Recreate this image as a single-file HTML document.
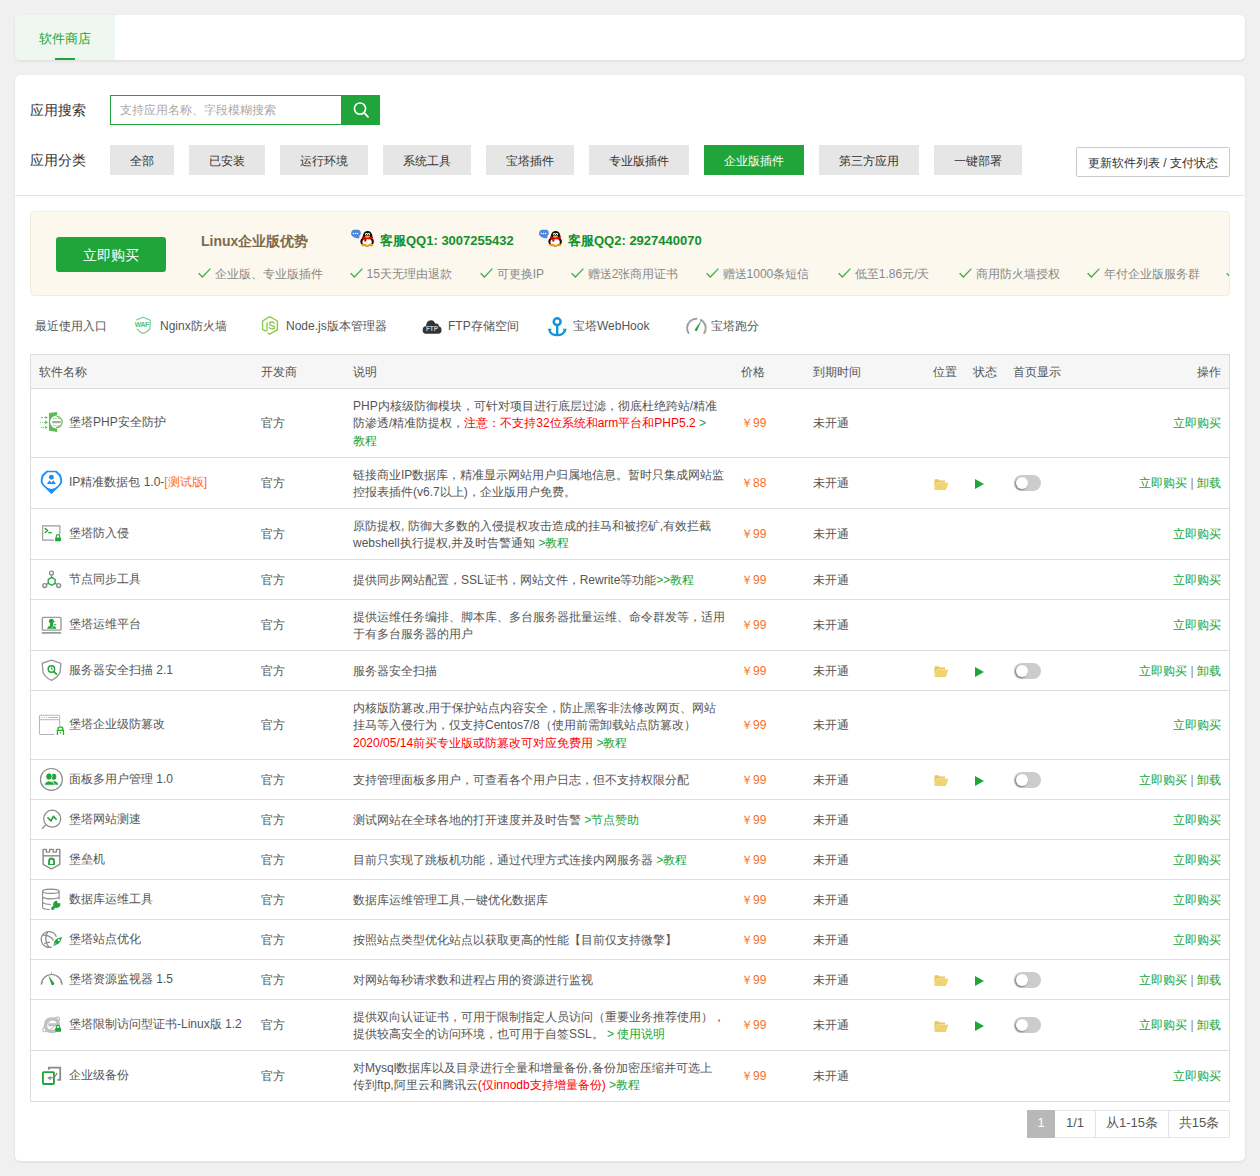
<!DOCTYPE html>
<html><head><meta charset="utf-8">
<style>
*{box-sizing:border-box}
html,body{margin:0;padding:0}
body{width:1260px;height:1176px;overflow:hidden;background:#f0f0f0;font-family:"Liberation Sans",sans-serif;color:#666;font-size:12px;position:relative}
.abs{position:absolute}
.card{position:absolute;background:#fff;border-radius:5px;box-shadow:0 1px 3px rgba(0,0,0,.09)}
.tab{position:absolute;left:0;top:0;width:100px;height:45px;background:#eff8f0;border-radius:5px 0 0 5px;color:#20a53a;font-size:13px;line-height:45px;text-align:center}
.tab i{position:absolute;left:40px;top:43px;width:20px;height:2px;background:#20a53a}
.tab{padding-top:1px}
.lbl{position:absolute;font-size:14px;color:#333;line-height:20px;white-space:nowrap}
.sinput{position:absolute;left:95px;top:20px;width:232px;height:30px;border:1px solid #20a53a;font-size:12px;color:#aaa;line-height:28px;padding-left:9px;white-space:nowrap}
.sbtn{position:absolute;left:326px;top:20px;width:39px;height:30px;background:#20a53a}
.cat{position:absolute;top:70px;height:30px;line-height:32px;background:#e6e6e6;color:#333;font-size:12px;text-align:center;white-space:nowrap}
.cat.on{background:#20a53a;color:#fff}
.more{position:absolute;left:1061px;top:72px;width:154px;height:30px;border:1px solid #ccc;border-radius:2px;line-height:30px;text-align:center;font-size:12px;color:#333;white-space:nowrap}
.sep{position:absolute;left:0;top:120px;width:1230px;height:1px;background:#e4e4e4}
.qq{width:24px;height:18px}
.qqt{font-size:13px;font-weight:bold;color:#12902c;margin-top:1px;line-height:20px;white-space:nowrap}
.chk{white-space:nowrap;height:20px}
.chk svg{position:absolute;left:0;top:6px}
.chk span{position:absolute;left:17px;top:0;font-size:12px;line-height:20px;color:#888}
.tbl{position:absolute;left:30px;top:354px;width:1200px;height:748px;border:1px solid #ddd;border-bottom:0}
.tr{position:absolute;left:0;width:1198px;border-bottom:1px solid #ddd}
.th{background:#f6f6f6}
.tr .c{position:absolute;top:1px;bottom:-1px;display:flex;align-items:center;white-space:nowrap;font-size:12px;line-height:17.14px;color:#555}
.tr .d{display:flex}
.tr .d>div{}
.g{color:#20a53a}
.r{color:red}
.o{color:#fc6d26}
.tr .p{color:#fc6d26}
.ic{position:absolute;top:0;bottom:0;display:flex;align-items:center}
.fold{position:absolute;left:903px;top:50%;margin-top:-4.5px;width:15px;height:11px}
.play{position:absolute;left:944px;top:50%;margin-top:-4px;width:0;height:0;border-left:9px solid #20a53a;border-top:5.5px solid transparent;border-bottom:5.5px solid transparent}
.sw{position:absolute;left:983px;top:50%;margin-top:-8px;width:27px;height:16px;border-radius:8px;background:#ccc}
.sw i{position:absolute;left:2px;top:2px;width:12px;height:12px;border-radius:50%;background:#fff;box-shadow:-1px 1px 2px rgba(0,0,0,.4)}
.chk span{top:2px}
.rc{font-size:12px;line-height:18px;margin-top:1px;color:#555;white-space:nowrap}
.ri{width:18px;height:18px}
.pg{height:28px;border:1px solid #e5e5e5;line-height:24px;text-align:center;font-size:13px;color:#555;white-space:nowrap}
.tr .c.g{color:#20a53a}
</style></head><body>

<div class="card" style="left:15px;top:15px;width:1230px;height:45px">
  <div class="tab">软件商店<i></i></div>
</div>

<div class="card" style="left:15px;top:75px;width:1230px;height:1086px">
  <div class="lbl" style="left:15px;top:25px">应用搜索</div>
  <div class="sinput">支持应用名称、字段模糊搜索</div>
  <div class="sbtn"><svg width="39" height="30" viewBox="0 0 39 30"><circle cx="19" cy="13.6" r="5.6" fill="none" stroke="#fff" stroke-width="1.6"/><line x1="23" y1="17.6" x2="27" y2="21.8" stroke="#fff" stroke-width="1.8" stroke-linecap="round"/></svg></div>
  <div class="lbl" style="left:15px;top:75px">应用分类</div>
  <div class="cat" style="left:95px;width:64px">全部</div>
  <div class="cat" style="left:174px;width:76px">已安装</div>
  <div class="cat" style="left:265px;width:88px">运行环境</div>
  <div class="cat" style="left:368px;width:88px">系统工具</div>
  <div class="cat" style="left:471px;width:88px">宝塔插件</div>
  <div class="cat" style="left:574px;width:100px">专业版插件</div>
  <div class="cat on" style="left:689px;width:100px">企业版插件</div>
  <div class="cat" style="left:804px;width:100px">第三方应用</div>
  <div class="cat" style="left:919px;width:88px">一键部署</div>
  <div class="more">更新软件列表 / 支付状态</div>
  <div class="sep"></div>
</div>


<div class="abs" style="left:30px;top:211px;width:1200px;height:85px;background:#fcf8ee;border:1px solid #f3ecdb;border-radius:4px;overflow:hidden">
  <div class="abs" style="left:25px;top:25px;width:110px;height:35px;background:#20a53a;border-radius:3px;color:#fff;font-size:14px;line-height:37px;text-align:center">立即购买</div>
  <div class="abs" style="left:170px;top:18px;font-size:14px;font-weight:bold;color:#7d6a4c;line-height:20px;white-space:nowrap;margin-top:1px">Linux企业版优势</div>
  
  <div class="abs qqt" style="left:349px;top:18px">客服QQ1: 3007255432</div>
  
  <div class="abs qqt" style="left:537px;top:18px">客服QQ2: 2927440070</div>
  <div class="abs chk" style="left:167.0px;top:50px"><svg width="13" height="10" viewBox="0 0 13 10"><polyline points="0.6,5.2 4.4,9 12.4,0.6" fill="none" stroke="#3cb04f" stroke-width="1.3"/></svg><span>企业版、专业版插件</span></div>
  <div class="abs chk" style="left:318.6px;top:50px"><svg width="13" height="10" viewBox="0 0 13 10"><polyline points="0.6,5.2 4.4,9 12.4,0.6" fill="none" stroke="#3cb04f" stroke-width="1.3"/></svg><span>15天无理由退款</span></div>
  <div class="abs chk" style="left:448.7px;top:50px"><svg width="13" height="10" viewBox="0 0 13 10"><polyline points="0.6,5.2 4.4,9 12.4,0.6" fill="none" stroke="#3cb04f" stroke-width="1.3"/></svg><span>可更换IP</span></div>
  <div class="abs chk" style="left:539.8px;top:50px"><svg width="13" height="10" viewBox="0 0 13 10"><polyline points="0.6,5.2 4.4,9 12.4,0.6" fill="none" stroke="#3cb04f" stroke-width="1.3"/></svg><span>赠送2张商用证书</span></div>
  <div class="abs chk" style="left:674.6px;top:50px"><svg width="13" height="10" viewBox="0 0 13 10"><polyline points="0.6,5.2 4.4,9 12.4,0.6" fill="none" stroke="#3cb04f" stroke-width="1.3"/></svg><span>赠送1000条短信</span></div>
  <div class="abs chk" style="left:806.8px;top:50px"><svg width="13" height="10" viewBox="0 0 13 10"><polyline points="0.6,5.2 4.4,9 12.4,0.6" fill="none" stroke="#3cb04f" stroke-width="1.3"/></svg><span>低至1.86元/天</span></div>
  <div class="abs chk" style="left:927.7px;top:50px"><svg width="13" height="10" viewBox="0 0 13 10"><polyline points="0.6,5.2 4.4,9 12.4,0.6" fill="none" stroke="#3cb04f" stroke-width="1.3"/></svg><span>商用防火墙授权</span></div>
  <div class="abs chk" style="left:1055.9px;top:50px"><svg width="13" height="10" viewBox="0 0 13 10"><polyline points="0.6,5.2 4.4,9 12.4,0.6" fill="none" stroke="#3cb04f" stroke-width="1.3"/></svg><span>年付企业版服务群</span></div>
  <div class="abs chk" style="left:1195.2px;top:50px"><svg width="13" height="10" viewBox="0 0 13 10"><polyline points="0.6,5.2 4.4,9 12.4,0.6" fill="none" stroke="#3cb04f" stroke-width="1.3"/></svg><span>更多</span></div>
</div>

<div class="abs rc" style="left:35px;top:316px">最近使用入口</div>
<div class="abs ri" style="left:135px;top:316px"></div><div class="abs rc" style="left:160px;top:316px">Nginx防火墙</div>
<div class="abs ri" style="left:262px;top:316px"></div><div class="abs rc" style="left:286px;top:316px">Node.js版本管理器</div>
<div class="abs ri" style="left:422px;top:316px"></div><div class="abs rc" style="left:448px;top:316px">FTP存储空间</div>
<div class="abs ri" style="left:547px;top:316px"></div><div class="abs rc" style="left:573px;top:316px">宝塔WebHook</div>
<div class="abs ri" style="left:686px;top:316px"></div><div class="abs rc" style="left:711px;top:316px">宝塔跑分</div>

<!--TABLE-->
<div class="tbl">
<div class="tr th" style="top:0;height:34px"><span class="c" style="left:8px">软件名称</span><span class="c" style="left:230px">开发商</span><span class="c" style="left:322px">说明</span><span class="c" style="left:710px">价格</span><span class="c" style="left:782px">到期时间</span><span class="c" style="left:902px">位置</span><span class="c" style="left:942px">状态</span><span class="c" style="left:982px">首页显示</span><span class="c" style="right:8px">操作</span></div>
<div class="tr" style="top:34px;height:69px"><span class="c" style="left:38px;top:0;bottom:0"><div>堡塔PHP安全防护</div></span><span class="c" style="left:230px">官方</span><span class="c d" style="left:322px"><div>PHP内核级防御模块，可针对项目进行底层过滤，彻底杜绝跨站/精准<br>防渗透/精准防提权，<span class="r">注意：不支持32位系统和arm平台和PHP5.2</span><span class="g"> &gt;<br>教程</span></div></span><span class="c p" style="left:710px">￥99</span><span class="c" style="left:782px">未开通</span><span class="c g" style="right:8px">立即购买</span></div>
<div class="tr" style="top:103px;height:51px"><span class="c" style="left:38px;top:0;bottom:0"><div>IP精准数据包 1.0-<span class="o">[测试版]</span></div></span><span class="c" style="left:230px">官方</span><span class="c d" style="left:322px"><div>链接商业IP数据库，精准显示网站用户归属地信息。暂时只集成网站监<br>控报表插件(v6.7以上)，企业版用户免费。</div></span><span class="c p" style="left:710px">￥88</span><span class="c" style="left:782px">未开通</span><span class="fold"><svg width="15" height="11" viewBox="0 0 15 11"><path d="M0.5,10.5 V1 Q0.5,0.3 1.2,0.3 H4.6 L5.8,1.4 H11 V3.6 H3 Z" fill="#e8c85a"/><path d="M3,3.8 H14.4 L11.8,11 H0.4 Z" fill="#f0d36e"/></svg></span><span class="play"></span><span class="sw"><i></i></span><span class="c g" style="right:8px"><div>立即购买 <span style="color:#888">|</span> 卸载</div></span></div>
<div class="tr" style="top:154px;height:51px"><span class="c" style="left:38px;top:0;bottom:0"><div>堡塔防入侵</div></span><span class="c" style="left:230px">官方</span><span class="c d" style="left:322px"><div>原防提权, 防御大多数的入侵提权攻击造成的挂马和被挖矿,有效拦截<br>webshell执行提权,并及时告警通知 <span class="g">&gt;教程</span></div></span><span class="c p" style="left:710px">￥99</span><span class="c" style="left:782px">未开通</span><span class="c g" style="right:8px">立即购买</span></div>
<div class="tr" style="top:205px;height:40px"><span class="c" style="left:38px;top:0;bottom:0"><div>节点同步工具</div></span><span class="c" style="left:230px">官方</span><span class="c d" style="left:322px"><div>提供同步网站配置，SSL证书，网站文件，Rewrite等功能<span class="g">&gt;&gt;教程</span></div></span><span class="c p" style="left:710px">￥99</span><span class="c" style="left:782px">未开通</span><span class="c g" style="right:8px">立即购买</span></div>
<div class="tr" style="top:245px;height:51px"><span class="c" style="left:38px;top:0;bottom:0"><div>堡塔运维平台</div></span><span class="c" style="left:230px">官方</span><span class="c d" style="left:322px"><div>提供运维任务编排、脚本库、多台服务器批量运维、命令群发等，适用<br>于有多台服务器的用户</div></span><span class="c p" style="left:710px">￥99</span><span class="c" style="left:782px">未开通</span><span class="c g" style="right:8px">立即购买</span></div>
<div class="tr" style="top:296px;height:40px"><span class="c" style="left:38px;top:0;bottom:0"><div>服务器安全扫描 2.1</div></span><span class="c" style="left:230px">官方</span><span class="c d" style="left:322px"><div>服务器安全扫描</div></span><span class="c p" style="left:710px">￥99</span><span class="c" style="left:782px">未开通</span><span class="fold"><svg width="15" height="11" viewBox="0 0 15 11"><path d="M0.5,10.5 V1 Q0.5,0.3 1.2,0.3 H4.6 L5.8,1.4 H11 V3.6 H3 Z" fill="#e8c85a"/><path d="M3,3.8 H14.4 L11.8,11 H0.4 Z" fill="#f0d36e"/></svg></span><span class="play"></span><span class="sw"><i></i></span><span class="c g" style="right:8px"><div>立即购买 <span style="color:#888">|</span> 卸载</div></span></div>
<div class="tr" style="top:336px;height:69px"><span class="c" style="left:38px;top:0;bottom:0"><div>堡塔企业级防篡改</div></span><span class="c" style="left:230px">官方</span><span class="c d" style="left:322px"><div>内核版防篡改,用于保护站点内容安全，防止黑客非法修改网页、网站<br>挂马等入侵行为，仅支持Centos7/8（使用前需卸载站点防篡改）<br><span class="r">2020/05/14前买专业版或防篡改可对应免费用</span> <span class="g">&gt;教程</span></div></span><span class="c p" style="left:710px">￥99</span><span class="c" style="left:782px">未开通</span><span class="c g" style="right:8px">立即购买</span></div>
<div class="tr" style="top:405px;height:40px"><span class="c" style="left:38px;top:0;bottom:0"><div>面板多用户管理 1.0</div></span><span class="c" style="left:230px">官方</span><span class="c d" style="left:322px"><div>支持管理面板多用户，可查看各个用户日志，但不支持权限分配</div></span><span class="c p" style="left:710px">￥99</span><span class="c" style="left:782px">未开通</span><span class="fold"><svg width="15" height="11" viewBox="0 0 15 11"><path d="M0.5,10.5 V1 Q0.5,0.3 1.2,0.3 H4.6 L5.8,1.4 H11 V3.6 H3 Z" fill="#e8c85a"/><path d="M3,3.8 H14.4 L11.8,11 H0.4 Z" fill="#f0d36e"/></svg></span><span class="play"></span><span class="sw"><i></i></span><span class="c g" style="right:8px"><div>立即购买 <span style="color:#888">|</span> 卸载</div></span></div>
<div class="tr" style="top:445px;height:40px"><span class="c" style="left:38px;top:0;bottom:0"><div>堡塔网站测速</div></span><span class="c" style="left:230px">官方</span><span class="c d" style="left:322px"><div>测试网站在全球各地的打开速度并及时告警 <span class="g">&gt;节点赞助</span></div></span><span class="c p" style="left:710px">￥99</span><span class="c" style="left:782px">未开通</span><span class="c g" style="right:8px">立即购买</span></div>
<div class="tr" style="top:485px;height:40px"><span class="c" style="left:38px;top:0;bottom:0"><div>堡垒机</div></span><span class="c" style="left:230px">官方</span><span class="c d" style="left:322px"><div>目前只实现了跳板机功能，通过代理方式连接内网服务器 <span class="g">&gt;教程</span></div></span><span class="c p" style="left:710px">￥99</span><span class="c" style="left:782px">未开通</span><span class="c g" style="right:8px">立即购买</span></div>
<div class="tr" style="top:525px;height:40px"><span class="c" style="left:38px;top:0;bottom:0"><div>数据库运维工具</div></span><span class="c" style="left:230px">官方</span><span class="c d" style="left:322px"><div>数据库运维管理工具,一键优化数据库</div></span><span class="c p" style="left:710px">￥99</span><span class="c" style="left:782px">未开通</span><span class="c g" style="right:8px">立即购买</span></div>
<div class="tr" style="top:565px;height:40px"><span class="c" style="left:38px;top:0;bottom:0"><div>堡塔站点优化</div></span><span class="c" style="left:230px">官方</span><span class="c d" style="left:322px"><div>按照站点类型优化站点以获取更高的性能【目前仅支持微擎】</div></span><span class="c p" style="left:710px">￥99</span><span class="c" style="left:782px">未开通</span><span class="c g" style="right:8px">立即购买</span></div>
<div class="tr" style="top:605px;height:40px"><span class="c" style="left:38px;top:0;bottom:0"><div>堡塔资源监视器 1.5</div></span><span class="c" style="left:230px">官方</span><span class="c d" style="left:322px"><div>对网站每秒请求数和进程占用的资源进行监视</div></span><span class="c p" style="left:710px">￥99</span><span class="c" style="left:782px">未开通</span><span class="fold"><svg width="15" height="11" viewBox="0 0 15 11"><path d="M0.5,10.5 V1 Q0.5,0.3 1.2,0.3 H4.6 L5.8,1.4 H11 V3.6 H3 Z" fill="#e8c85a"/><path d="M3,3.8 H14.4 L11.8,11 H0.4 Z" fill="#f0d36e"/></svg></span><span class="play"></span><span class="sw"><i></i></span><span class="c g" style="right:8px"><div>立即购买 <span style="color:#888">|</span> 卸载</div></span></div>
<div class="tr" style="top:645px;height:51px"><span class="c" style="left:38px;top:0;bottom:0"><div>堡塔限制访问型证书-Linux版 1.2</div></span><span class="c" style="left:230px">官方</span><span class="c d" style="left:322px"><div>提供双向认证证书，可用于限制指定人员访问（重要业务推荐使用），<br>提供较高安全的访问环境，也可用于自签SSL。 <span class="g"> &gt; 使用说明</span></div></span><span class="c p" style="left:710px">￥99</span><span class="c" style="left:782px">未开通</span><span class="fold"><svg width="15" height="11" viewBox="0 0 15 11"><path d="M0.5,10.5 V1 Q0.5,0.3 1.2,0.3 H4.6 L5.8,1.4 H11 V3.6 H3 Z" fill="#e8c85a"/><path d="M3,3.8 H14.4 L11.8,11 H0.4 Z" fill="#f0d36e"/></svg></span><span class="play"></span><span class="sw"><i></i></span><span class="c g" style="right:8px"><div>立即购买 <span style="color:#888">|</span> 卸载</div></span></div>
<div class="tr" style="top:696px;height:51px"><span class="c" style="left:38px;top:0;bottom:0"><div>企业级备份</div></span><span class="c" style="left:230px">官方</span><span class="c d" style="left:322px"><div>对Mysql数据库以及目录进行全量和增量备份,备份加密压缩并可选上<br>传到ftp,阿里云和腾讯云<span class="r">(仅innodb支持增量备份)</span> <span class="g">&gt;教程</span></div></span><span class="c p" style="left:710px">￥99</span><span class="c" style="left:782px">未开通</span><span class="c g" style="right:8px">立即购买</span></div>
</div>
<!--/TABLE--><!--/TABLE--><!--/TABLE--><!--/TABLE--><!--/TABLE--><!--/TABLE-->
<div class="abs pg" style="left:1027px;top:1110px;width:28px;background:#b8b8b8;border-color:#b8b8b8;color:#fff">1</div>
<div class="abs pg" style="left:1055px;top:1110px;width:41px;border-left:0">1/1</div>
<div class="abs pg" style="left:1095px;top:1110px;width:74px">从1-15条</div>
<div class="abs pg" style="left:1168px;top:1110px;width:62px">共15条</div>

<!--ICONS-->
<svg class="abs" style="left:34px;top:400px" width="40" height="40" viewBox="0 0 1176 1176">
<g fill="#5dba55">
<polygon points="440,385 680,350 680,940 440,905"/>
<rect x="205" y="500" width="55" height="30" rx="12"/><rect x="300" y="500" width="50" height="30" rx="12"/><polygon points="340,470 405,515 340,560"/>
<circle cx="190" cy="655" r="17"/><circle cx="250" cy="655" r="17"/><rect x="300" y="640" width="50" height="30" rx="12"/><polygon points="330,600 410,655 330,710"/>
<circle cx="215" cy="805" r="17"/><circle cx="275" cy="805" r="17"/><polygon points="330,760 400,805 330,850"/>
</g>
<circle cx="665" cy="648" r="190" fill="#fff"/>
<circle cx="665" cy="648" r="165" fill="none" stroke="#5dba55" stroke-width="36" stroke-dasharray="520 520" transform="rotate(-90 665 648)"/>
<path d="M560,560 Q665,520 770,560 M560,740 Q665,780 770,740" stroke="#5dba55" stroke-width="26" fill="none" stroke-dasharray="40 25"/>
<rect x="535" y="615" width="250" height="70" fill="#aaa" rx="10"/>
</svg>
<svg class="abs" style="left:34px;top:465px" width="40" height="40" viewBox="0 0 1176 1176">
<path fill-rule="evenodd" fill="#1e8ffa" d="M365,170 L665,170 L795,295 L825,420 L825,515 L785,590 L512,860 L240,590 L200,515 L200,420 L230,295 Z M405,215 L625,215 L740,320 L770,430 L770,505 L720,590 Q640,690 512,705 Q385,690 305,590 L255,505 L255,430 L285,320 Z"/>
<circle cx="512" cy="362" r="72" fill="#1e8ffa"/>
<path d="M380,555 L455,445 L512,520 L570,445 L645,555 Z" fill="#1e8ffa"/>
</svg>
<svg class="abs" style="left:34px;top:514px" width="40" height="40" viewBox="0 0 1176 1176">
<path d="M585,770 L255,770 L255,350 L760,350 L760,600" fill="none" stroke="#9a9a9a" stroke-width="34"/>
<polyline points="330,430 400,485 330,545" fill="none" stroke="#20a53a" stroke-width="44" stroke-linecap="round" stroke-linejoin="round"/>
<line x1="420" y1="548" x2="525" y2="548" stroke="#20a53a" stroke-width="38"/>
<path d="M655,700 L655,660 Q655,605 705,605 Q755,605 755,660 L755,700" fill="none" stroke="#20a53a" stroke-width="34"/>
<rect x="620" y="690" width="172" height="110" rx="14" fill="#20a53a"/>
<rect x="678" y="640" width="55" height="40" fill="#fff"/>
</svg>
<svg class="abs" style="left:34px;top:559px" width="40" height="40" viewBox="0 0 1176 1176">
<g fill="none" stroke="#8a8a8a" stroke-width="40">
<circle cx="515" cy="415" r="58"/><circle cx="315" cy="780" r="58"/><circle cx="725" cy="780" r="58"/>
<line x1="518" y1="470" x2="518" y2="540"/><line x1="365" y1="748" x2="420" y2="718"/><line x1="618" y1="718" x2="675" y2="748"/>
</g>
<polygon points="520,540 622,598 622,714 520,772 418,714 418,598" fill="none" stroke="#20a53a" stroke-width="38"/>
</svg>
<svg class="abs" style="left:34px;top:605px" width="40" height="40" viewBox="0 0 1176 1176">
<rect x="245" y="365" width="548" height="375" rx="28" fill="none" stroke="#9a9a9a" stroke-width="40"/>
<rect x="228" y="795" width="572" height="50" rx="18" fill="#9a9a9a"/>
<g fill="#20a53a">
<circle cx="512" cy="475" r="72"/><rect x="438" y="470" width="170" height="30" rx="10"/>
<rect x="472" y="520" width="95" height="120" rx="30"/>
<path d="M390,700 Q392,630 470,620 L560,620 Q650,630 655,700 Z"/>
<path d="M590,560 L670,575 L610,610 Z"/>
</g>
<line x1="515" y1="680" x2="580" y2="610" stroke="#fff" stroke-width="22"/>
</svg>
<svg class="abs" style="left:34px;top:650px" width="40" height="40" viewBox="0 0 1176 1176">
<path d="M240,390 L515,300 L790,395 L770,640 Q720,790 515,895 Q310,790 265,650 Z" fill="none" stroke="#9a9a9a" stroke-width="40" stroke-linejoin="round"/>
<circle cx="512" cy="560" r="95" fill="none" stroke="#20a53a" stroke-width="42"/>
<line x1="585" y1="635" x2="660" y2="710" stroke="#20a53a" stroke-width="46" stroke-linecap="round"/>
<path d="M512,500 L512,560 L560,560" fill="none" stroke="#20a53a" stroke-width="26"/>
</svg>
<svg class="abs" style="left:34px;top:705px" width="40" height="40" viewBox="0 0 1176 1176">
<path d="M600,865 L195,865 Q160,865 160,830 L160,335 Q160,300 195,300 L720,300 Q755,300 755,335 L755,600" fill="none" stroke="#b4b4c4" stroke-width="30"/>
<line x1="160" y1="432" x2="755" y2="432" stroke="#b4b4c4" stroke-width="30"/>
<g fill="#b4b4c4"><rect x="210" y="352" width="45" height="25" rx="8"/><circle cx="305" cy="365" r="16"/><circle cx="368" cy="365" r="16"/><rect x="420" y="350" width="285" height="30" rx="15"/></g>
<path d="M705,745 L705,705 Q705,640 778,640 Q850,640 850,705 L850,745" fill="none" stroke="#20b02a" stroke-width="36"/>
<path d="M688,885 L688,745 L868,745 L868,885" fill="none" stroke="#20b02a" stroke-width="36"/>
<circle cx="778" cy="815" r="24" fill="#20b02a"/>
</svg>
<svg class="abs" style="left:34px;top:759px" width="40" height="40" viewBox="0 0 1176 1176">
<circle cx="512" cy="600" r="322" fill="none" stroke="#8a8a8a" stroke-width="34"/>
<g fill="#20a53a">
<ellipse cx="585" cy="525" rx="70" ry="90"/>
<path d="M560,650 Q690,660 718,760 L600,760 Z"/>
</g>
<g fill="#20a53a" stroke="#fff" stroke-width="22">
<ellipse cx="440" cy="515" rx="92" ry="105"/>
<path d="M305,770 Q315,660 425,650 L470,650 Q595,660 618,770 Z"/>
</g>
</svg>
<svg class="abs" style="left:34px;top:799px" width="40" height="40" viewBox="0 0 1176 1176">
<circle cx="535" cy="580" r="250" fill="none" stroke="#8a8a8a" stroke-width="36"/>
<line x1="335" y1="770" x2="250" y2="860" stroke="#8a8a8a" stroke-width="36" stroke-linecap="round"/>
<polyline points="395,535 500,645 570,510 665,610" fill="none" stroke="#20a53a" stroke-width="48" stroke-linejoin="round"/>
</svg>
<svg class="abs" style="left:34px;top:839px" width="40" height="40" viewBox="0 0 1176 1176">
<path d="M268,305 L365,305 L365,385 L460,385 L460,305 L565,305 L565,385 L660,385 L660,305 L758,305 L758,745 L512,882 L268,745 Z" fill="none" stroke="#8a8a8a" stroke-width="42" stroke-linejoin="round"/>
<line x1="268" y1="495" x2="758" y2="495" stroke="#8a8a8a" stroke-width="42"/>
<path d="M443,765 L443,655 Q443,575 515,575 Q590,575 590,655 L590,765" fill="none" stroke="#20a53a" stroke-width="55"/>
<line x1="443" y1="748" x2="590" y2="748" stroke="#20a53a" stroke-width="30"/>
</svg>
<svg class="abs" style="left:34px;top:879px" width="40" height="40" viewBox="0 0 1176 1176">
<g fill="none" stroke="#8a8a8a" stroke-width="32">
<ellipse cx="495" cy="360" rx="245" ry="62"/>
<path d="M252,360 L252,850 Q300,900 465,895"/>
<path d="M738,360 L738,610"/>
<path d="M252,535 Q330,585 495,585 Q660,585 738,540"/>
<path d="M252,700 Q330,748 490,748"/>
</g>
<g fill="#20a53a">
<line x1="545" y1="870" x2="650" y2="765" stroke="#20a53a" stroke-width="85" stroke-linecap="round"/>
<circle cx="670" cy="745" r="105"/>
</g>
<circle cx="735" cy="660" r="55" fill="#fff"/>
</svg>
<svg class="abs" style="left:34px;top:919px" width="40" height="40" viewBox="0 0 1176 1176">
<g fill="none" stroke="#8a8a8a" stroke-width="36">
<path d="M660,520 A232,232 0 1 0 520,820"/>
<path d="M405,370 Q330,480 350,620 Q360,740 440,830"/>
<path d="M265,480 Q390,460 520,560 Q560,600 560,640"/>
<path d="M300,720 Q390,690 470,690"/>
</g>
<path d="M820,530 Q660,560 600,660 L560,810 L650,760 Q790,720 820,530 Z" fill="#20a53a"/>
<circle cx="730" cy="620" r="34" fill="#fff"/>
<path d="M570,790 L640,700" stroke="#fff" stroke-width="18"/>
</svg>
<svg class="abs" style="left:34px;top:959px" width="40" height="40" viewBox="0 0 1176 1176">
<path d="M215,760 A305,305 0 0 1 825,760" fill="none" stroke="#8a8a8a" stroke-width="34"/>
<g stroke="#8a8a8a" stroke-width="30"><line x1="515" y1="400" x2="515" y2="430"/><line x1="330" y1="500" x2="350" y2="520"/><line x1="700" y1="500" x2="680" y2="520"/><line x1="230" y1="685" x2="270" y2="685"/><line x1="800" y1="685" x2="770" y2="685"/></g>
<path d="M420,480 L595,710 Q600,770 545,770 Q495,765 500,715 Z" fill="#20a53a"/>
</svg>
<svg class="abs" style="left:34px;top:1004px" width="40" height="40" viewBox="0 0 1176 1176">
<g fill="none" stroke="#c0c0c0">
<path d="M700,720 Q640,810 530,810 Q340,810 340,630 Q340,440 530,440 Q720,440 720,610 L420,610" stroke-width="95"/>
<ellipse cx="505" cy="600" rx="310" ry="105" transform="rotate(-40 505 600)" stroke-width="34"/>
</g>
<path d="M660,700 L660,670 Q660,625 705,625 Q750,625 750,670 L750,700" fill="none" stroke="#20a53a" stroke-width="34"/>
<rect x="625" y="695" width="170" height="120" rx="22" fill="#20a53a"/>
</svg>
<svg class="abs" style="left:34px;top:1056px" width="40" height="40" viewBox="0 0 1176 1176">
<path d="M435,405 L435,340 L770,340 L770,705 L685,705" fill="none" stroke="#8a8a8a" stroke-width="52"/>
<rect x="262" y="475" width="325" height="350" rx="28" fill="none" stroke="#20a53a" stroke-width="56"/>
<path d="M675,495 Q650,625 470,650" fill="none" stroke="#8a8a8a" stroke-width="38"/>
<polygon points="385,650 490,590 490,715" fill="#8a8a8a"/>
</svg>
<svg class="abs" style="left:123px;top:305px" width="40" height="40" viewBox="0 0 1176 1176">
<path d="M390,440 L590,360 L805,450 L790,700 Q720,790 590,840 Q470,790 410,700" fill="none" stroke="#5cc06a" stroke-width="32" stroke-linejoin="round" opacity="0.85"/>
<text x="555" y="650" font-family="Liberation Sans" font-weight="bold" font-size="200" fill="#5cc06a" text-anchor="middle" letter-spacing="-10">WAF</text>
</svg>
<svg class="abs" style="left:250px;top:305px" width="40" height="40" viewBox="0 0 1176 1176">
<path d="M580,340 L805,470 L805,725 L580,855 L520,820" fill="none" stroke="#8cc84b" stroke-width="40" stroke-linejoin="round"/>
<path d="M500,510 L500,720 Q500,770 450,760 L370,715 L370,470 L580,340" fill="none" stroke="#8cc84b" stroke-width="40" stroke-linejoin="round"/>
<path d="M715,555 Q700,500 640,500 Q570,500 575,555 Q580,600 645,605 Q720,612 720,660 Q720,700 645,700 Q580,700 565,650" fill="none" stroke="#8cc84b" stroke-width="40"/>
</svg>
<svg class="abs" style="left:415px;top:312px" width="40" height="40" viewBox="0 0 1176 1176">
<path d="M320,640 Q225,640 225,530 Q225,430 320,420 Q340,240 470,240 Q570,240 590,340 Q700,320 700,420 Q780,440 780,540 Q780,640 680,640 Z" fill="#333"/>
<text x="500" y="560" font-family="Liberation Sans" font-weight="bold" font-size="190" fill="#ccc" text-anchor="middle">FTP</text>
</svg>
<svg class="abs" style="left:540px;top:312px" width="40" height="40" viewBox="0 0 1176 1176">
<circle cx="505" cy="285" r="100" fill="none" stroke="#1296db" stroke-width="75"/>
<line x1="505" y1="380" x2="505" y2="650" stroke="#1296db" stroke-width="70"/>
<path d="M280,555 Q330,680 505,680 Q680,680 730,555" fill="none" stroke="#1296db" stroke-width="70"/>
<polygon points="220,495 340,495 300,620" fill="#1296db"/><polygon points="670,495 790,495 730,620" fill="#1296db"/>
</svg>
<svg class="abs" style="left:676px;top:312px" width="40" height="40" viewBox="0 0 1176 1176">
<path d="M380,640 A275,275 0 1 1 820,640" fill="none" stroke="#a0a0a0" stroke-width="55" stroke-dasharray="630 90 900" />
<path d="M760,220 L620,550 Q580,580 545,530 Z" fill="#20a53a"/>
</svg>
<svg class="abs" style="left:345px;top:220px" width="40" height="40" viewBox="0 0 1176 1176">
<path d="M250,290 L410,290 Q470,330 465,400 Q460,470 400,480 L440,490 L400,545 L320,530 Q230,510 180,430 Q170,330 250,290 Z" fill="#4f86d8"/>
<circle cx="250" cy="395" r="22" fill="#fff"/><circle cx="310" cy="395" r="22" fill="#fff"/><circle cx="370" cy="395" r="22" fill="#fff"/>
<ellipse cx="665" cy="470" rx="140" ry="150" fill="#111"/>
<ellipse cx="650" cy="630" rx="200" ry="150" fill="#111"/>
<ellipse cx="650" cy="650" rx="140" ry="110" fill="#fff"/>
<circle cx="630" cy="420" r="38" fill="#fff"/><circle cx="695" cy="420" r="38" fill="#fff"/>
<circle cx="635" cy="430" r="16" fill="#000"/><circle cx="690" cy="430" r="16" fill="#000"/>
<ellipse cx="660" cy="495" rx="80" ry="35" fill="#f5b800"/>
<path d="M500,480 Q660,560 820,480 L820,540 Q700,590 640,560 L620,640 L570,630 L560,560 Q520,540 500,540 Z" fill="#e8000b"/>
<ellipse cx="560" cy="735" rx="85" ry="35" fill="#f59a00"/><ellipse cx="760" cy="735" rx="75" ry="35" fill="#f59a00"/>
</svg>
<svg class="abs" style="left:533px;top:220px" width="40" height="40" viewBox="0 0 1176 1176">
<path d="M250,290 L410,290 Q470,330 465,400 Q460,470 400,480 L440,490 L400,545 L320,530 Q230,510 180,430 Q170,330 250,290 Z" fill="#4f86d8"/>
<circle cx="250" cy="395" r="22" fill="#fff"/><circle cx="310" cy="395" r="22" fill="#fff"/><circle cx="370" cy="395" r="22" fill="#fff"/>
<ellipse cx="665" cy="470" rx="140" ry="150" fill="#111"/>
<ellipse cx="650" cy="630" rx="200" ry="150" fill="#111"/>
<ellipse cx="650" cy="650" rx="140" ry="110" fill="#fff"/>
<circle cx="630" cy="420" r="38" fill="#fff"/><circle cx="695" cy="420" r="38" fill="#fff"/>
<circle cx="635" cy="430" r="16" fill="#000"/><circle cx="690" cy="430" r="16" fill="#000"/>
<ellipse cx="660" cy="495" rx="80" ry="35" fill="#f5b800"/>
<path d="M500,480 Q660,560 820,480 L820,540 Q700,590 640,560 L620,640 L570,630 L560,560 Q520,540 500,540 Z" fill="#e8000b"/>
<ellipse cx="560" cy="735" rx="85" ry="35" fill="#f59a00"/><ellipse cx="760" cy="735" rx="75" ry="35" fill="#f59a00"/>
</svg>
<!--/ICONS-->
</body></html>
